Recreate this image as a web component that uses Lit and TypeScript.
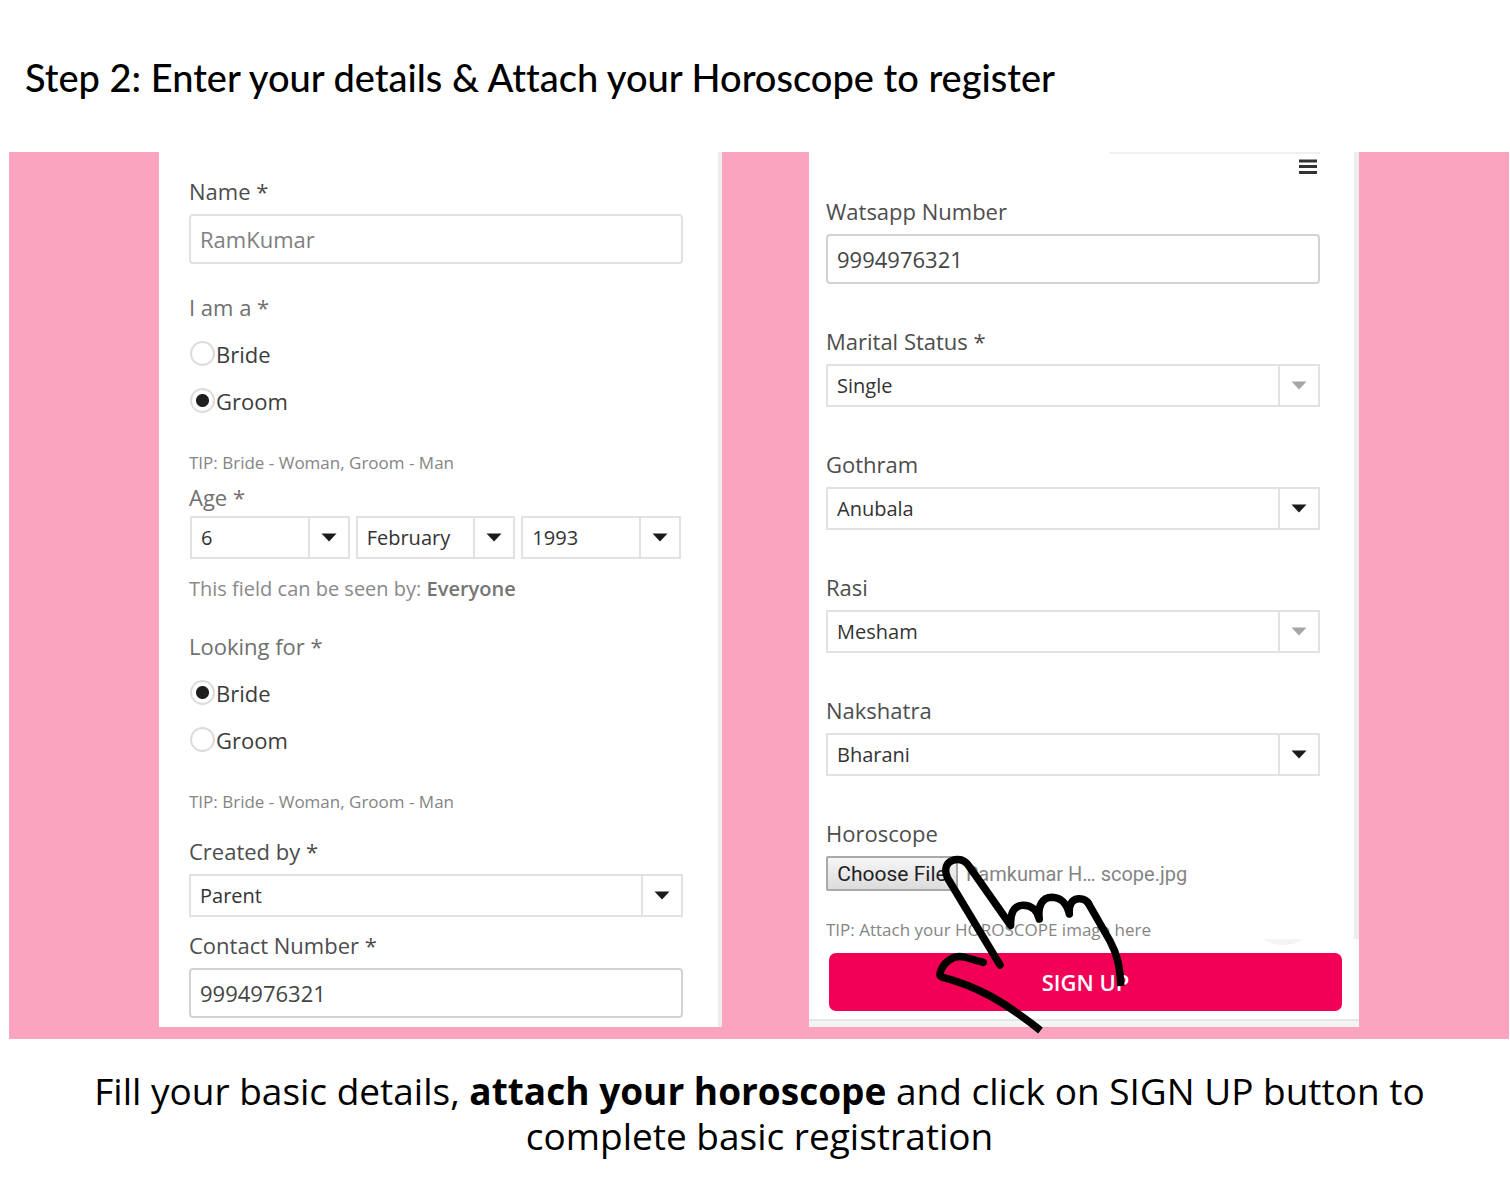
import { LitElement, html, css, svg } from "lit";
import { customElement, property } from "lit/decorators.js";

const sharedStyles = css`
  * {
    box-sizing: border-box;
  }
  .label {
    display: block;
    font-size: 22px;
    line-height: 30px;
    color: #4d4d4d;
  }
  .soft {
    color: #707070;
  }
`;

@customElement("select-box")
export class SelectBox extends LitElement {
  @property() label = "";
  @property() value = "";
  @property({ type: Boolean }) muted = false;
  @property({ type: Boolean }) bare = false;

  static styles = [
    sharedStyles,
    css`
      :host {
        display: block;
        min-width: 0;
      }
      .field {
        display: flex;
        flex-direction: column;
        gap: 8px;
      }
      .box {
        display: grid;
        height: 43px;
        border: 2px solid #e2e2e2;
        background: #fff;
      }
      .control,
      .arrow {
        grid-area: 1 / 1;
      }
      .control {
        appearance: none;
        width: 100%;
        min-width: 0;
        margin: 0;
        padding: 0 44px 0 9px;
        border: 0;
        background: transparent;
        color: #333;
        font-family: inherit;
        font-size: 20px;
      }
      .arrow {
        justify-self: end;
        display: flex;
        align-items: center;
        justify-content: center;
        width: 40px;
        border-left: 2px solid #e2e2e2;
        color: #1a1a1a;
        pointer-events: none;
      }
      .arrow.muted {
        color: #a6a6a6;
      }
    `,
  ];

  render() {
    return html`<div class="field">
      ${this.bare ? "" : html`<label class="label" for="control">${this.label}</label>`}
      <div class="box">
        <select class="control" id="control" aria-label=${this.label}>
          <option>${this.value}</option>
        </select>
        <span class="arrow ${this.muted ? "muted" : ""}">
          <svg width="16" height="9" viewBox="0 0 16 9" aria-hidden="true">
            <path d="M0.500 0.500H15.500L8 8.500Z" fill="currentColor" />
          </svg>
        </span>
      </div>
    </div>`;
  }
}

@customElement("text-box")
export class TextBox extends LitElement {
  @property() label = "";
  @property() value = "";
  @property({ type: Boolean }) muted = false;

  static styles = [
    sharedStyles,
    css`
      :host {
        display: block;
      }
      .field {
        display: flex;
        flex-direction: column;
        gap: 8px;
      }
      .control {
        width: 100%;
        height: 50px;
        margin: 0;
        padding: 0 9px;
        border: 2px solid #d2d2d2;
        border-radius: 4px;
        background: #fff;
        color: #444;
        font-family: inherit;
        font-size: 22px;
      }
      .control.muted {
        border-color: #e2e2e2;
        color: #808080;
      }
    `,
  ];

  render() {
    return html`<div class="field">
      <label class="label" for="control">${this.label}</label>
      <input class="control ${this.muted ? "muted" : ""}" id="control" type="text" .value=${this.value} />
    </div>`;
  }
}

@customElement("radio-pair")
export class RadioPair extends LitElement {
  @property() label = "";
  @property() checked = "";

  static styles = [
    sharedStyles,
    css`
      :host {
        display: block;
      }
      .group {
        margin: 0;
        padding: 0;
        border: 0;
      }
      .legend {
        padding: 0;
        margin-bottom: 8px;
      }
      .option {
        display: flex;
        align-items: center;
        gap: 1px;
        height: 47px;
        padding-left: 1px;
        color: #3c3c3c;
        font-size: 22px;
        line-height: 30px;
      }
      .dot {
        appearance: none;
        flex: none;
        width: 25px;
        height: 25px;
        margin: 0;
        border: 2px solid #dcdcdc;
        border-radius: 50%;
        background: #fff;
      }
      .dot:checked {
        background: radial-gradient(circle, #1e1e1e 6px, #fff 7px);
      }
      .tip {
        margin: 27px 0 0;
        color: #858585;
        font-size: 17px;
        line-height: 24px;
      }
    `,
  ];

  render() {
    return html`<fieldset class="group">
        <legend class="label soft legend">${this.label}</legend>
        ${["Bride", "Groom"].map(
          (name) => html`<label class="option">
            <input class="dot" type="radio" name="choice" .checked=${name === this.checked} />
            <span>${name}</span>
          </label>`
        )}
      </fieldset>
      <p class="tip">TIP: Bride - Woman, Groom - Man</p>`;
  }
}

const pointingHand = svg`
  <g fill="none" stroke="#000" stroke-width="7.500" stroke-linecap="round" stroke-linejoin="round">
    <path d="M70 115L17.500 28C12 15 20 9.500 28 9.500C33 9.500 37 12.500 40 17.500L80.700 75.500C80 65 83 55.500 93 55.200C101 55 107 60 109.300 69C107.500 56 112 47.500 122 47.300C131 47.500 137 54 139.300 64C138.500 55 142 49 148.500 48.700C153 48.500 156.500 50 158.500 53.500"/>
    <path d="M53.300 112.300L34 107C22 104.500 12 114 10 123.500C9.800 125.500 11 126.800 12.700 127.300"/>
  </g>
  <g fill="none" stroke="#000" stroke-width="7.500">
    <path d="M157.500 51.800L180 91C187 104 190 116 190.800 136"/>
    <path d="M11.500 126.800C46 136 72 150 110.500 180.500"/>
  </g>`;

@customElement("app-root")
export class AppRoot extends LitElement {
  static styles = [
    sharedStyles,
    css`
      :host {
        display: block;
        background: #fff;
        color: #000;
        font-family: "Open Sans", "Noto Sans", sans-serif;
      }
      .title {
        margin: 0;
        padding: 53px 25px 51px;
        font-family: Lato, sans-serif;
        font-size: 38px;
        font-weight: 500;
        font-variant-ligatures: none;
        line-height: 48px;
      }
      .stage {
        display: grid;
        grid-template-columns: 563fr 550fr;
        gap: 87px;
        margin: 0 1px 0 9px;
        padding: 0 calc(10% - 1px) 12px;
        background: #faa4c0;
      }
      .card {
        min-width: 0;
        background: #fff;
      }
      .first {
        padding: 24px 35px 9px 30px;
        border-right: 4px solid #ededed;
      }
      .radios {
        margin-top: 28px;
      }
      .age {
        margin-top: 7px;
      }
      .dates {
        display: grid;
        grid-template-columns: repeat(3, 1fr);
        gap: 6px;
        margin: 4px 2px 15px 1px;
      }
      .note {
        margin: 0 0 27px;
        color: #8a8a8a;
        font-size: 20px;
        line-height: 30px;
      }
      .note-strong {
        color: #757575;
        font-weight: 600;
      }
      .created {
        margin-top: 22px;
      }
      .contact {
        margin-top: 13px;
      }
      .second {
        display: flex;
        flex-direction: column;
      }
      .scroll {
        padding: 0 34px 0 17px;
        border-right: 5px solid #ededed;
      }
      .topbar {
        display: flex;
        justify-content: flex-end;
        width: 211px;
        margin-left: auto;
        padding: 5px 3px 0 0;
        border-top: 2px solid #f0f0f0;
      }
      .menu {
        display: flex;
        padding: 0;
        border: 0;
        background: none;
        color: #333;
      }
      .stack {
        display: flex;
        flex-direction: column;
        gap: 42px;
        padding-top: 21px;
      }
      .attach {
        height: 121px;
        overflow: visible;
      }
      .file-row {
        position: relative;
        display: flex;
        align-items: center;
        gap: 8px;
        margin-top: 8px;
        font-family: Roboto, sans-serif;
        font-size: 20px;
      }
      .file-button {
        flex: none;
        width: 132px;
        height: 35px;
        padding: 0;
        border: 2px solid #a9a9a9;
        border-radius: 2px;
        background: linear-gradient(#f6f6f6, #dcdcdc);
        color: #222;
        font-family: inherit;
        font-size: 21px;
      }
      .file-name {
        color: #858585;
        white-space: nowrap;
      }
      .hand {
        position: absolute;
        left: 104px;
        top: -6px;
        z-index: 1;
        pointer-events: none;
      }
      .tip {
        margin: 27px 0 0;
        color: #858585;
        font-size: 17px;
        line-height: 24px;
      }
      .submit {
        display: flex;
        flex-direction: column;
        align-items: center;
        padding: 0 17px 8px 20px;
      }
      .bubble {
        align-self: flex-end;
        margin-right: 39px;
        color: #f4f4f4;
      }
      .signup {
        width: 100%;
        height: 58px;
        margin-top: 7px;
        padding: 0;
        border: 0;
        border-radius: 7px;
        background: #f20056;
        color: #fff;
        font-family: inherit;
        font-size: 22px;
        font-weight: 600;
        line-height: 56px;
      }
      .edge {
        height: 8px;
        border-top: 2px solid #e6e6e6;
        background: #f4f4f4;
      }
      .caption {
        margin: 0;
        padding: 29px 60px 30px 69px;
        font-size: 37px;
        line-height: 45px;
        text-align: center;
      }
    `,
  ];

  private openPicker() {
    this.renderRoot.querySelector<HTMLInputElement>("#horoscope")?.click();
  }

  render() {
    return html`
      <h1 class="title">Step 2: Enter your details &amp; Attach your Horoscope to register</h1>
      <main class="stage">
        <section class="card first">
          <text-box label="Name *" value="RamKumar" muted></text-box>
          <radio-pair class="radios" label="I am a *" checked="Groom"></radio-pair>
          <span class="label soft age">Age *</span>
          <div class="dates">
            <select-box bare label="Day" value="6"></select-box>
            <select-box bare label="Month" value="February"></select-box>
            <select-box bare label="Year" value="1993"></select-box>
          </div>
          <p class="note">This field can be seen by: <span class="note-strong">Everyone</span></p>
          <radio-pair label="Looking for *" checked="Bride"></radio-pair>
          <select-box class="created" label="Created by *" value="Parent"></select-box>
          <text-box class="contact" label="Contact Number *" value="9994976321"></text-box>
        </section>

        <section class="card second">
          <div class="scroll">
            <div class="topbar">
              <button class="menu" type="button" aria-label="Menu">
                <svg width="18" height="16" viewBox="0 0 18 16" aria-hidden="true">
                  <path d="M0 2H18M0 7.500H18M0 13.500H18" stroke="currentColor" stroke-width="3" />
                </svg>
              </button>
            </div>
            <div class="stack">
              <text-box label="Watsapp Number" value="9994976321"></text-box>
              <select-box label="Marital Status *" value="Single" muted></select-box>
              <select-box label="Gothram" value="Anubala"></select-box>
              <select-box label="Rasi" value="Mesham" muted></select-box>
              <select-box label="Nakshatra" value="Bharani"></select-box>
              <div class="attach">
                <label class="label" for="horoscope">Horoscope</label>
                <div class="file-row">
                  <input id="horoscope" type="file" hidden />
                  <button class="file-button" type="button" @click=${this.openPicker}>Choose File</button>
                  <span class="file-name">Ramkumar H… scope.jpg</span>
                  <svg class="hand" width="200" height="190" viewBox="0 0 200 190" aria-hidden="true">${pointingHand}</svg>
                </div>
                <p class="tip">TIP: Attach your HOROSCOPE image here</p>
              </div>
            </div>
          </div>
          <div class="submit">
            <svg class="bubble" width="40" height="7" viewBox="0 0 40 7" aria-hidden="true">
              <path d="M0 0H40C29 8 11 8 0 0Z" fill="currentColor" />
            </svg>
            <button class="signup" type="button">SIGN UP</button>
          </div>
          <div class="edge"></div>
        </section>
      </main>
      <p class="caption">
        Fill your basic details, <b>attach your horoscope</b> and click on SIGN UP button to complete basic registration
      </p>
    `;
  }
}
